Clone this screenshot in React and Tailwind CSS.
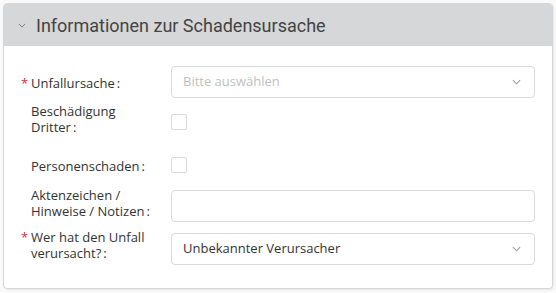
import React from "react";

const Chevron = ({ className }) => (
  <svg viewBox="0 0 10 6" className={className} fill="none" stroke="currentColor" strokeWidth="1.2">
    <path d="M1 1l4 4 4-4" />
  </svg>
);

const Label = ({ required, children }) => (
  <div className="w-[140px] shrink-0 pr-3 text-[13px] leading-4 text-[#333]">
    {required && <span className="-ml-[10px] inline-block w-[10px] text-[#f5222d]">*</span>}
    {children}
    <span className="ml-[2px]">:</span>
  </div>
);

const Select = ({ value, placeholder }) => (
  <div className="flex h-8 flex-1 items-center justify-between rounded border border-[#d9d9d9] bg-white pl-[11px] pr-[13px] text-[13px]">
    <span className={value ? "text-[#333]" : "text-[#bfbfbf]"}>{value || placeholder}</span>
    <Chevron className="h-[6px] w-[9px] text-[#999]" />
  </div>
);

const Checkbox = ({ className = "" }) => (
  <div className={`h-4 w-4 rounded-[2px] border border-[#d9d9d9] bg-white ${className}`} />
);

export default function App() {
  return (
    <div className="min-h-screen bg-[#fafafa] p-[3px] font-['Open_Sans',sans-serif]">
      <div className="overflow-hidden rounded border border-[#d6d6d6] bg-white shadow-[1px_1px_2px_rgba(0,0,0,0.08)]">
        {/* Header */}
        <div className="flex h-[42px] items-center bg-[#d6d7d9] pl-[14px]">
          <Chevron className="h-[5px] w-[8px] text-[#777]" />
          <h2 className="ml-[10px] font-['Roboto',sans-serif] text-[18px] text-[#444]">
            Informationen zur Schadensursache
          </h2>
        </div>

        {/* Form */}
        <div className="pb-[23px] pl-[27px] pr-[17px] pt-[20px]">
          <div className="flex items-start">
            <div className="pt-[9px]">
              <Label required>Unfallursache</Label>
            </div>
            <Select placeholder="Bitte auswählen" />
          </div>

          <div className="mt-[5px] flex items-start">
            <Label>
              Beschädigung
              <br />
              Dritter
            </Label>
            <Checkbox className="mt-[11px]" />
          </div>

          <div className="mt-[22px] flex items-start">
            <div className="pt-[1px]">
              <Label>Personenschaden</Label>
            </div>
            <Checkbox />
          </div>

          <div className="mt-[13px] flex items-start">
            <Label>
              Aktenzeichen /
              <br />
              Hinweise / Notizen
            </Label>
            <div className="mt-[3px] h-8 flex-1 rounded border border-[#d9d9d9] bg-white" />
          </div>

          <div className="mt-[7px] flex items-start">
            <Label required>
              Wer hat den Unfall
              <br />
              verursacht?
            </Label>
            <div className="mt-[4px] flex flex-1">
              <Select value="Unbekannter Verursacher" />
            </div>
          </div>
        </div>
      </div>
    </div>
  );
}
